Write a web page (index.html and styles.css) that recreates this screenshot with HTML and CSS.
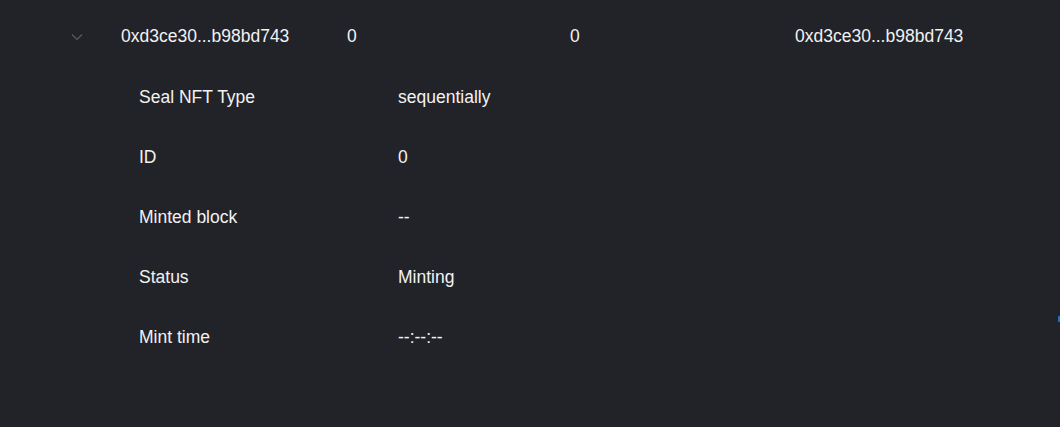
FILE: index.html
```html
<!DOCTYPE html>
<html>
<head>
<meta charset="utf-8">
<link rel="stylesheet" href="styles.css">
</head>
<body>
<div class="table">
  <div class="row-head">
    <div class="cell-toggle">
      <svg width="12" height="8" viewBox="0 0 12 8"><path d="M1 1.5 L6 6.5 L11 1.5" fill="none" stroke="#5b5c61" stroke-width="1.2"/></svg>
    </div>
    <div class="c1">0xd3ce30...b98bd743</div>
    <div class="c2">0</div>
    <div class="c3">0</div>
    <div class="c4">0xd3ce30...b98bd743</div>
  </div>
  <div class="details">
    <div class="d-row"><div class="d-label">Seal NFT Type</div><div class="d-value">sequentially</div></div>
    <div class="d-row"><div class="d-label">ID</div><div class="d-value">0</div></div>
    <div class="d-row"><div class="d-label">Minted block</div><div class="d-value">--</div></div>
    <div class="d-row"><div class="d-label">Status</div><div class="d-value">Minting</div></div>
    <div class="d-row"><div class="d-label">Mint time</div><div class="d-value">--:--:--</div></div>
  </div>
</div>
<div class="edge-mark"></div>
</body>
</html>
```
FILE: styles.css
```css
html, body {
  margin: 0;
  padding: 0;
  background: #222328;
  height: 100%;
  overflow: hidden;
}
body {
  font-family: "Liberation Sans", Arial, sans-serif;
  font-size: 17.5px;
  color: #f2f2f2;
  position: relative;
}
.row-head {
  display: flex;
  align-items: center;
  height: 72px;
}
.cell-toggle {
  width: 121px;
  box-sizing: border-box;
  padding-left: 71px;
  padding-top: 1px;
  display: flex;
  align-items: center;
}
.c1 { width: 226px; }
.c2 { width: 223px; }
.c3 { width: 225px; }
.c4 { flex: 1; }
.details {
  padding-left: 139px;
  display: flex;
  flex-direction: column;
}
.d-row {
  display: flex;
  align-items: center;
  height: 60px;
  margin-top: -11px;
  margin-bottom: 11px;
}
.details .d-row:first-child { margin-top: -5px; }
.d-label { width: 259px; }
.edge-mark {
  position: absolute;
  right: 0;
  top: 316px;
  width: 2px;
  height: 6px;
  background: #1f6fd8;
  border-radius: 1px 0 0 1px;
}
```
